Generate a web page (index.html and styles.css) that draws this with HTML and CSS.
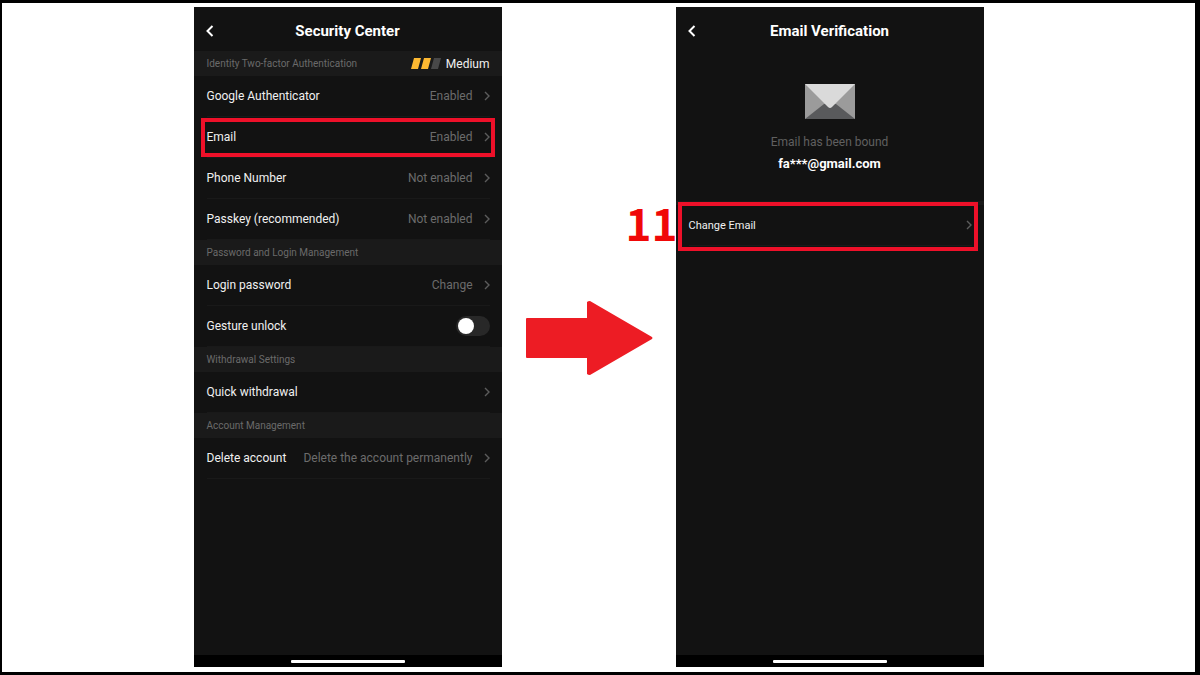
FILE: index.html
```
<!DOCTYPE html>
<html lang="en">
<head>
    <meta charset="UTF-8">
    <meta name="viewport" content="width=device-width, initial-scale=1.0">
    <title>Security Center</title>
    <link rel="stylesheet" href="styles.css">
</head>
<body>
    <svg class="symbols" aria-hidden="true">
        <symbol id="back" viewBox="0 0 8 12"><path d="M6.5 1 L1.5 6 L6.5 11"/></symbol>
        <symbol id="next" viewBox="0 0 6 10"><path d="M1 1 L5 5 L1 9"/></symbol>
    </svg>

    <main class="steps">
        <section class="phone">
            <header class="topbar">
                <button class="back" aria-label="Back"><svg><use href="#back"/></svg></button>
                <h1>Security Center</h1>
            </header>

            <div class="group">
                <h2>Identity Two-factor Authentication</h2>
                <span class="level">
                    <svg class="level-bars" viewBox="0 0 30 11">
                        <path fill="#fdb932" d="M3 0H10L7 11H0Z"/>
                        <path fill="#fdb932" d="M13 0H20L17 11H10Z"/>
                        <path fill="#484848" d="M23 0H30L27 11H20Z"/>
                    </svg>
                    Medium
                </span>
            </div>
            <a class="row" href="#"><span>Google Authenticator</span><span class="value">Enabled</span><svg class="next"><use href="#next"/></svg></a>
            <a class="row marked" href="#"><span>Email</span><span class="value">Enabled</span><svg class="next"><use href="#next"/></svg></a>
            <a class="row" href="#"><span>Phone Number</span><span class="value">Not enabled</span><svg class="next"><use href="#next"/></svg></a>
            <a class="row" href="#"><span>Passkey (recommended)</span><span class="value">Not enabled</span><svg class="next"><use href="#next"/></svg></a>

            <div class="group"><h2>Password and Login Management</h2></div>
            <a class="row" href="#"><span>Login password</span><span class="value">Change</span><svg class="next"><use href="#next"/></svg></a>
            <div class="row">
                <label for="gesture">Gesture unlock</label>
                <input class="switch" type="checkbox" id="gesture">
            </div>

            <div class="group"><h2>Withdrawal Settings</h2></div>
            <a class="row" href="#"><span>Quick withdrawal</span><svg class="next"><use href="#next"/></svg></a>

            <div class="group"><h2>Account Management</h2></div>
            <a class="row" href="#"><span>Delete account</span><span class="value">Delete the account permanently</span><svg class="next"><use href="#next"/></svg></a>

            <div class="home"></div>
        </section>

        <svg class="arrow" viewBox="0 0 128 74">
            <path d="M2 17H62V1Q63 0 65 0L127 36Q128 37 127 38L65 74Q63 74 62 73V57H2Q1 57 1 56V18Q1 17 2 17Z"/>
        </svg>

        <section class="phone">
            <header class="topbar">
                <button class="back" aria-label="Back"><svg><use href="#back"/></svg></button>
                <h1>Email Verification</h1>
            </header>

            <div class="bound">
                <svg class="envelope" viewBox="0 0 50 35">
                    <rect width="50" height="35" fill="#9b9b9b"/>
                    <path fill="#595a5c" d="M0 35L19 20H31L50 35Z"/>
                    <path fill="#dadada" d="M0 0H50L27 23Q25 25 23 23Z"/>
                </svg>
                <p>Email has been bound</p>
                <strong>fa***@gmail.com</strong>
            </div>

            <a class="row change marked" href="#">
                <span class="number">11</span>
                <span>Change Email</span>
                <svg class="next"><use href="#next"/></svg>
            </a>

            <div class="home"></div>
        </section>
    </main>
</body>
</html>
```

FILE: styles.css
```
* {
    box-sizing: border-box;
}
body {
    margin: 0;
    background: #fff;
    color: #f0f0f0;
    font-family: Roboto, "Noto Sans", sans-serif;
    font-size: 12px;
}
.symbols {
    position: absolute;
    width: 0;
    height: 0;
}
.steps {
    display: flex;
    justify-content: center;
    gap: 23px;
    min-height: 100vh;
    padding: 4px 20px 5px 0;
    border: solid #000;
    border-width: 3px 5px 3px 2px;
}
.phone {
    display: flex;
    flex-direction: column;
    flex: 0 1 308px;
    background: #121212;
}
.topbar {
    display: grid;
    grid-template-columns: 20px 1fr 20px;
    align-items: center;
    height: 44px;
    padding: 4px 12px 0;
}
h1 {
    margin: 0;
    font-size: 15px;
    font-weight: 700;
    text-align: center;
    color: #fff;
}
.back {
    display: flex;
    padding: 0;
    border: 0;
    background: none;
}
.back svg {
    width: 8px;
    height: 12px;
    fill: none;
    stroke: #fff;
    stroke-width: 2;
}
.group {
    display: flex;
    align-items: center;
    justify-content: space-between;
    height: 25px;
    padding: 0 12px 0 13px;
    background: #1a1a1a;
}
h2 {
    margin: 0;
    font-size: 10px;
    font-weight: 400;
    color: #6a6a6a;
}
.level {
    display: flex;
    align-items: center;
    gap: 5px;
}
.level-bars {
    width: 30px;
    height: 11px;
}
.row {
    display: flex;
    align-items: center;
    position: relative;
    height: 41px;
    margin: 0 12px 0 13px;
    border-bottom: 1px solid #191919;
    color: inherit;
    text-decoration: none;
}
.value {
    margin-left: auto;
    color: #6c6c6c;
}
.next {
    width: 6px;
    height: 10px;
    margin-left: auto;
    fill: none;
    stroke: #5c5c5c;
    stroke-width: 1.4;
}
.value + .next {
    margin-left: 11px;
}
.switch {
    appearance: none;
    width: 34px;
    height: 20px;
    margin: 0 0 0 auto;
    padding: 2px;
    border-radius: 10px;
    background: #282828;
}
.switch::before {
    content: "";
    display: block;
    width: 16px;
    height: 16px;
    border-radius: 50%;
    background: #fff;
}
.switch:checked::before {
    margin-left: auto;
}
/* red frame around the item to tap */
.marked::after {
    content: "";
    position: absolute;
    inset: 1px -5px 0 -6px;
    border: 4px solid #ee1029;
}
.number {
    position: absolute;
    right: 100%;
    bottom: 1px;
    margin-right: 11px;
    font-family: "Noto Sans CJK SC", sans-serif;
    font-size: 44px;
    font-weight: 700;
    line-height: 44px;
    color: #f00808;
}
.arrow {
    flex: none;
    width: 128px;
    height: 74px;
    margin-top: 294px;
    fill: #ed1c24;
}
.bound {
    display: flex;
    flex-direction: column;
    align-items: center;
    padding: 33px 0 30px;
    border-bottom: 4px solid #191919;
}
.envelope {
    width: 50px;
    height: 35px;
}
.bound p {
    margin: 16px 0 8px;
    line-height: 14px;
    color: #606060;
}
.bound strong {
    font-size: 13px;
    line-height: 14px;
    color: #fff;
}
.change {
    font-size: 11px;
}
.change.marked::after {
    inset: -3px -6px -6px -11px;
}
.home {
    display: flex;
    justify-content: center;
    align-items: center;
    height: 12px;
    margin-top: auto;
    background: #000;
}
.home::before {
    content: "";
    width: 114px;
    height: 3px;
    border-radius: 1px;
    background: #fff;
}
```
